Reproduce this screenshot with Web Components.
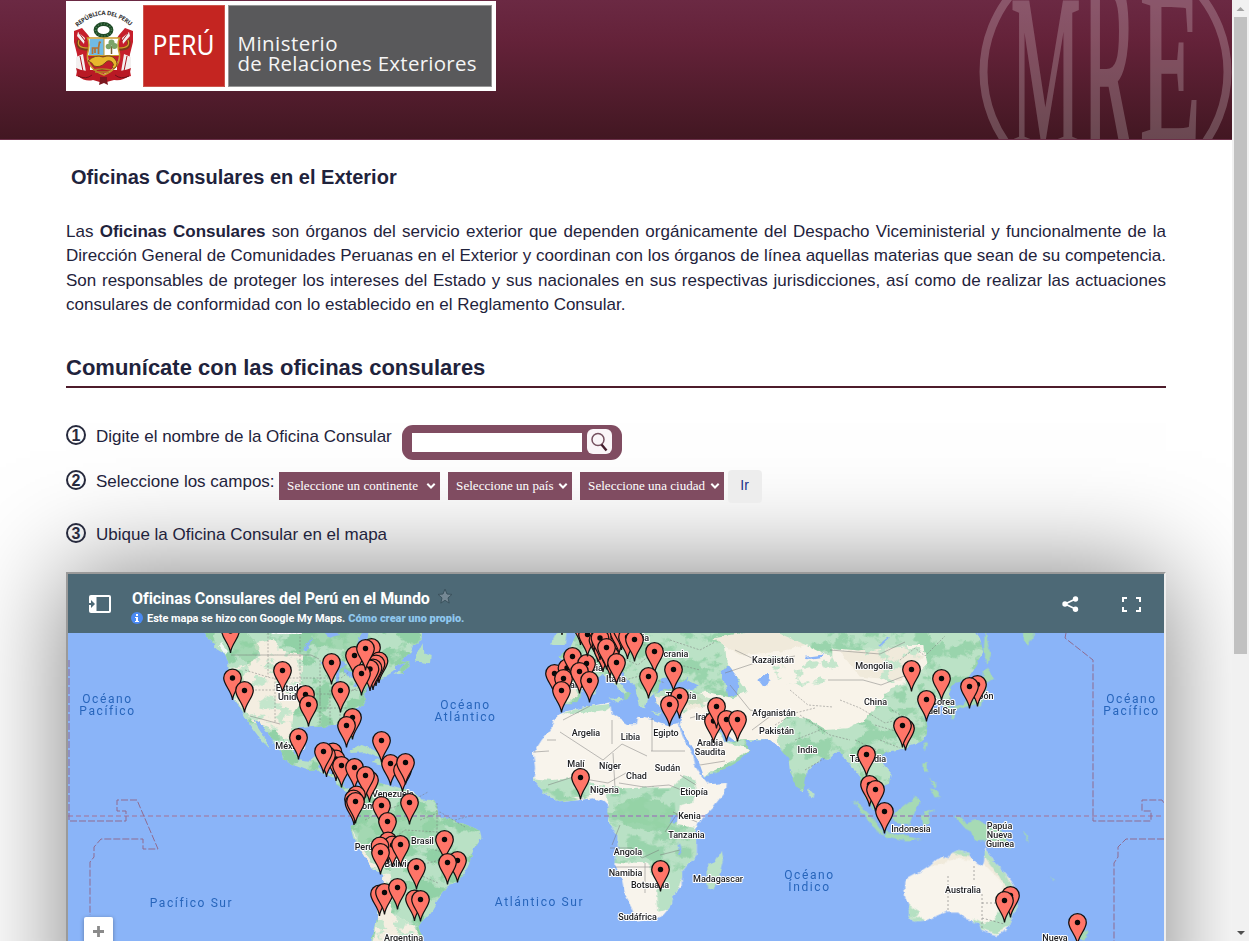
<!DOCTYPE html>
<html lang="es">
<head>
<meta charset="utf-8">
<title>Oficinas Consulares en el Exterior</title>
<style>
html,body{margin:0;height:941px;overflow:hidden;background:#fff}
body{font-family:"Liberation Sans",sans-serif;color:#1f233c}
</style>
</head>
<body>
<consular-page></consular-page>
<script>
const define=(name,html,after)=>customElements.define(name,class extends HTMLElement{
  constructor(){super();this.attachShadow({mode:'open'}).innerHTML=html;}
  connectedCallback(){if(after)after(this,this.shadowRoot);}
});

define('national-crest',`<style>:host{display:block;width:70px;height:86px}svg{display:block}</style>
<svg width="70" height="86" viewBox="70 3 70 86">
<defs><path id="arc" d="M77.500 27Q104 3 131.500 27"/></defs>
<text font-family="Noto Sans" font-size="6" font-weight="700" fill="#333" textLength="59"><textPath href="#arc" textLength="59">REPÚBLICA DEL PERU</textPath></text>
<path d="M74 31l8-3 6 7 2 3v38l-6 2-8-2q3-12 1-22l-3-12zM133 31l-8-3-6 7-2 3v38l6 2 8-2q-3-12-1-22l3-12z" fill="#c61f2c"/>
<path d="M78 32l7 6-1 6-7-8zM129 32l-7 6 1 6 7-8zM76 57l7-3 3 18-10-3zM131 57l-7-3-3 18 10-3z" fill="#f3f0f0"/>
<path d="M79 33l6 8M128 33l-6 8M80 56l3 15M127 56l-3 15" stroke="#a81721" stroke-width="1"/>
<path d="M79 40q-4 9 9 9M128 40q4 9-9 9" fill="none" stroke="#7b3b19" stroke-width="3.400"/>
<path d="M79 40q-3 8 9 8M128 40q3 8-9 8" fill="none" stroke="#d4a32a" stroke-width="1.200"/>
<path d="M76 68l2 8q7 6 15 4l10 3 11-3q9 1 15-4l2-8q-10 4-14 2H90q-6 2-14-2" fill="#b91925"/>
<path d="M78 76q8 4 14-1M129 76q-8 4-14-1" fill="none" stroke="#6e1119"/>
<ellipse cx="103.500" cy="30" rx="8" ry="6" fill="none" stroke="#1e4a26" stroke-width="3.800"/><ellipse cx="103.500" cy="30" rx="8" ry="6" fill="none" stroke="#52835a" stroke-width="1.600" stroke-dasharray="1 2"/>
<path d="M87.500 38h32q-3 6 0 16 1 14-15.500 21Q86 68 87.500 54q3-10 0-16z" fill="#fff" stroke="#c99a2c" stroke-width="1.500"/>
<path d="M89.500 39h14.500v16H89q2-8 .500-16z" fill="#70bbe5"/>
<path d="M88 56h31q-1 12-15.500 18Q89 69 88 56z" fill="#c01f2b"/><path d="M88 55.500h31M104 38v17" stroke="#c99a2c"/>
<path d="M92.500 54v-6h6M98.500 54v-6l1-6M95 48v5M99 42l2 .500" fill="none" stroke="#b67332" stroke-width="1.700"/>
<path d="M111.500 46v8" stroke="#765c2e" stroke-width="1.500"/>
<g fill="#7ba468"><circle cx="108.500" cy="46.500" r="2.800"/><circle cx="114.500" cy="46" r="3"/><circle cx="111.500" cy="42.500" r="3"/></g>
<path d="M88 61q7-7 15-4 8-3 12 2 4 5 0 9-2 1-3-1 3-2 0-5-4-3-7 1-5 5-11 3-2-4-6-5" fill="#e8b72d" stroke="#714414" stroke-width=".900"/>
<path d="M93 70q9-2 18 0M95 72h14" stroke="#b38225" stroke-width="1.300"/>
<path d="M100 77h7v3l1 5-4-2-5 2 1-5z" fill="#7b181f"/>
</svg>`);

define('site-header',`<style>
:host{display:flex;height:139px;border-bottom:1px solid #6b3049;background:linear-gradient(#6b2943 0,#642239 30%,#421722 100%);justify-content:space-between;box-sizing:content-box}
.logo{margin:1px 0 0 66px;width:430px;height:90px;background:#fff;display:flex;gap:3px;box-sizing:border-box;padding:4px 0 0 4px}
national-crest{margin:-2px 3px 0 0;flex:none}.logo svg{display:block;flex:none}.mark{display:block}
</style>
<div class="logo"><national-crest></national-crest>
<svg width="82" height="82" style="margin-left:-3px"><rect width="82" height="82" fill="#c42521"/><rect x=".5" y=".5" width="81" height="81" fill="none" stroke="#d06b62" stroke-width=".7"/><text x="9.500" y="50" font-family="Noto Sans" font-size="26.500" fill="#fff" textLength="62" lengthAdjust="spacingAndGlyphs">PERÚ</text></svg>
<svg width="264" height="82"><rect width="264" height="82" fill="#59595b"/><rect x=".5" y=".5" width="263" height="81" fill="none" stroke="#969696"/><g font-family="Open Sans" font-size="20.500" fill="#f5f5f5"><text x="9.500" y="46" textLength="100">Ministerio</text><text x="9.500" y="66" textLength="239">de Relaciones Exteriores</text></g></svg></div>
<svg class="mark" width="260" height="139" viewBox="972 0 260 139"><g opacity=".21" fill="#fff"><circle cx="1105.500" cy="72" r="122" fill="none" stroke="#fff" stroke-width="8"/>
<g font-family="Liberation Serif" font-size="100" stroke="#fff" stroke-width="1.800">
<text transform="translate(1011 147) scale(.78 2.200)">M</text><text transform="translate(1082 166) scale(.83 2.850)">R</text><text transform="translate(1140 140) scale(.99 2.200)">E</text></g></g></svg>`);

define('step-row',`<style>:host{display:flex;align-items:flex-start;font-size:17px;line-height:24px}.n{flex:none;display:grid;place-items:center;width:20px;height:20px;box-sizing:border-box;border:2px solid #272a3d;border-radius:50%;font:bold 16px/17px "Liberation Sans",sans-serif;color:#272a3d;margin-right:10px}::slotted(*){flex:none}.l{flex:none}</style><span class="n"></span><span class="l"></span><slot></slot>`,
(h,r)=>{r.querySelector('.n').textContent=h.getAttribute('n');r.querySelector('.l').textContent=h.getAttribute('label');});

define('search-box',`<style>:host{display:flex;box-sizing:border-box;width:220px;height:35px;border-radius:11px;background:#804c61;padding:4px 10px;gap:5px}.i{width:170px;height:19px;margin-top:4px;background:#fff}.b{width:25px;height:25px;border-radius:6px;background:#faf5f8}</style><div class="i"></div><div class="b"><svg width="25" height="25"><circle cx="11" cy="10.500" r="6" fill="none" stroke="#75505f" stroke-width="1.500"/><path d="M14.500 15.500L19.500 21.500" stroke="#431c2c" stroke-width="2.400"/></svg></div>`);

define('pick-list',`<style>:host{display:flex;align-items:center;justify-content:space-between;box-sizing:border-box;height:28px;background:#804c61;color:#fff;padding:0 4px 0 8.500px;font:13.100px "Liberation Serif",serif;white-space:nowrap}svg{flex:none}</style><slot></slot><svg width="10" height="8"><path d="M1.300 1.700L5 5.500 8.700 1.700" fill="none" stroke="#fff" stroke-width="2"/></svg>`);

define('go-button',`<style>:host{display:block;box-sizing:border-box;width:34px;height:33px;border-radius:4px;background:#ededed;font-size:14px;line-height:31px;text-align:center;color:#20308a}</style><slot></slot>`);

define('side-scroll',`<style>:host{display:flex;flex-direction:column;justify-content:space-between;width:17px;height:941px;background:#f1f1f1}.t{width:13px;height:637px;margin:0 2px auto;background:#c1c1c1}svg{display:block}</style><svg width="17" height="17"><path d="M4.500 11L8.500 7l4 4z" fill="#a3a3a3"/></svg><div class="t"></div><svg width="17" height="17"><path d="M5 7l4 4 4-4z" fill="#505050"/></svg>`);

define('map-bar',`<style>:host{display:flex;height:59px;background:#4d6976;font-family:Roboto,sans-serif;color:#fff}
.panel{margin:21px 21px 0 21px;width:22px;flex:none}.t{font-size:16px;font-weight:700;line-height:20px;display:flex;white-space:nowrap;letter-spacing:-.060px}.t svg{margin:-1px 0 0 7px}.s{font-size:11px;font-weight:700;line-height:15px;display:flex;white-space:nowrap;margin-top:2px;letter-spacing:-.030px}.s svg{margin:1px 4px 0 -1px}.s b{color:#8fc7ee;margin-left:3px}.c{padding-top:15px}.share{margin:22px 0 0 auto}.full{margin:22px 23px 0 43px}</style>
<svg class="panel" width="22" height="19"><path d="M2 0H20q2 0 2 2v14q0 2-2 2H2q-2 0-2-2V2Q0 0 2 0z" fill="#fff"/><path d="M7.500 2H20v14H7.500z" fill="#4d6976"/><path d="M0 8h2V5l4 4-4 4v-3H0z" fill="#4d6976"/></svg>
<div class="c"><div class="t"><span>Oficinas Consulares del Perú en el Mundo</span><svg width="16" height="17"><path d="M8 1l2 5 5 .400-4 3.500 1.200 5.200L8 12.300l-4.200 2.800L5 9.900 1 6.400 6 6z" fill="#758894" stroke="#3b525d"/></svg></div><div class="s"><svg width="12" height="12"><circle cx="6" cy="6" r="6" fill="#4a8af4"/><path d="M5 2h2v2H5zM4 5h3v4h1v1H4V9h1V6H4z" fill="#fff"/></svg><span>Este mapa se hizo con Google My Maps.</span><b>Cómo crear uno propio.</b></div></div>
<svg class="share" width="17" height="17"><path d="M13.500 3L3 8l10.500 5" fill="none" stroke="#fff" stroke-width="1.700"/><g fill="#fff"><circle cx="13.500" cy="3" r="2.700"/><circle cx="3" cy="8" r="2.700"/><circle cx="13.500" cy="13.300" r="2.700"/></g></svg>
<svg class="full" width="19" height="17"><path d="M5 2H1v4M14 2h4v4M5 15H1v-4M14 15h4v-4" fill="none" stroke="#fff" stroke-width="2"/></svg>`);

define('world-map',`<style>:host{display:block;position:relative;height:308px;overflow:hidden;background:#8ab4f8}svg{display:block}.zoom{position:absolute;left:16px;top:284px;width:29px;height:40px;background:#fff;border-radius:2px;box-shadow:0 1px 4px #0005}</style>
<svg id="m" width="1096" height="308" viewBox="68 633 1096 308">
<defs>
<filter id="rough" x="-5%" y="-5%" width="110%" height="110%"><feTurbulence type="fractalNoise" baseFrequency=".13" numOctaves="3" seed="6"/><feDisplacementMap in="SourceGraphic" scale="5" xChannelSelector="R" yChannelSelector="G"/></filter>
<filter id="woods" x="0" y="0" width="100%" height="100%" color-interpolation-filters="sRGB"><feTurbulence type="fractalNoise" baseFrequency=".016 .02" numOctaves="4" seed="11"/><feColorMatrix values="0 0 0 0 .57  0 0 0 0 .82  0 0 0 0 .65  10 0 0 0 -4.900"/><feComposite in2="SourceGraphic" operator="in"/></filter>
<filter id="steppe" x="0" y="0" width="100%" height="100%" color-interpolation-filters="sRGB"><feTurbulence type="fractalNoise" baseFrequency=".02 .03" numOctaves="4" seed="23"/><feColorMatrix values="0 0 0 0 .77  0 0 0 0 .9  0 0 0 0 .8  12 0 0 0 -6.400"/><feComposite in2="SourceGraphic" operator="in"/></filter>
<g id="pin"><path d="M0 22C-.700 13-8.800 7-8.800 0A8.800 8.800 0 0 1 8.800 0C8.800 7 .700 13 0 22z" fill="#ff7568" stroke="#111" stroke-width="1.250"/><circle r="2.700" fill="#090909"/></g>
<clipPath id="cw"><path d="M428 190L445 222 470 250 490 262 505 290 505 320 503 345 515 385 530 410 548 440 560 465 575 490 590 510 605 530 628 552 622 535 605 505 592 485 580 460 598 470 615 495 640 525 655 545 665 565 670 582 700 600 740 615 770 613 800 630 825 640 830 660 850 675 870 690 880 682 865 668 850 665 845 635 820 625 790 620 775 607 790 575 765 573 745 590 715 585 697 550 693 520 700 500 720 490 745 487 780 485 800 482 830 478 850 490 865 520 880 520 875 490 868 460 890 440 915 410 912 385 925 360 945 350 975 335 1000 320 1010 300 1040 290 1025 310 1000 330 1030 325 1045 305 1050 290 1020 285 1050 265 1060 240 1085 225 1085 190z"/><path d="M870 690L900 665 940 660 960 655 1000 663 1060 680 1080 703 1115 705 1130 720 1135 750 1165 760 1210 777 1260 797 1265 820 1240 855 1230 890 1215 925 1195 950 1165 960 1150 980 1130 1010 1110 1045 1085 1070 1075 1085 1080 1100 1090 1115 1080 1140 935 1140 945 1085 955 1045 965 995 970 930 940 910 920 885 900 855 880 820 872 790 885 770 865 745 880 705z"/></clipPath>
<clipPath id="af"><path d="M245 262L300 250 390 232 395 265 425 285 445 298 470 298 475 275 520 285 560 300 595 295 600 310 615 350 640 395 645 420 670 460 685 478 738 474 735 500 700 545 665 580 645 610 650 640 650 690 605 740 605 785 580 810 575 840 550 870 520 885 470 890 455 850 435 810 425 760 403 715 415 670 412 630 385 590 385 545 370 530 340 520 300 525 240 532 195 505 160 465 165 430 160 385 185 345 215 310 220 285z"/></clipPath>
<clipPath id="as"><path d="M222 175L225 220 245 235 290 235 300 215 310 185 340 170 365 150 390 160 405 180 430 205 430 225 445 215 450 205 425 180 400 150 390 125 410 120 430 150 460 180 475 220 480 245 495 250 500 225 525 205 530 235 550 260 590 262 605 270 600 300 610 320 640 370 660 420 672 455 720 440 780 405 812 375 795 350 775 335 765 350 735 350 720 320 700 285 715 300 735 325 760 345 800 348 870 345 890 360 910 385 925 400 930 440 950 480 965 500 975 480 980 440 1000 420 1030 400 1045 405 1070 380 1085 380 1095 400 1110 420 1125 435 1140 455 1145 495 1165 530 1182 560 1180 540 1165 500 1155 465 1175 460 1205 485 1230 475 1235 450 1210 420 1200 395 1220 380 1250 375 1270 370 1320 355 1340 330 1343 305 1335 270 1315 240 1320 220 1350 215 1385 240 1390 258 1410 255 1415 230 1405 210 1425 170 1460 165 1490 120 1510 80 1500 40 1470 0 280 0 290 25 270 70 235 95 260 110 265 145z"/></clipPath>
<clipPath id="au"><path d="M252 960L253 945 300 920 330 900 345 885 365 873 385 880 395 865 415 855 450 865 447 875 470 895 485 905 493 890 495 850 510 870 525 895 550 920 575 950 595 985 590 1025 575 1060 560 1095 530 1110 485 1095 475 1075 450 1065 435 1060 415 1040 380 1040 355 1050 320 1065 285 1070 268 1060 270 1035 255 995z"/></clipPath>
</defs>
<g filter="url(#rough)">
<g transform="translate(60 565) scale(.33333)"><g clip-path="url(#cw)"><path d="M400 180H1300V1150H400z" fill="#b9e1c5"/><path d="M400 180H1300V1150H400z" filter="url(#woods)"/>
<path id="prairie" d="M580 235L640 225 670 260 730 270 720 370 735 400 700 450 695 500 715 550 690 545 650 500 580 470 525 400 510 310 560 300 600 270zM870 780L900 840 935 890 990 920 1000 970 990 1040 1060 1080 1090 1140 940 1140 955 1040 960 920 920 900z" fill="#f4eee1"/><use href="#prairie" filter="url(#steppe)"/>
<path d="M510 200h50l40 50-30 50-50-40zM750 190h160l40 40-60 30-80-10-50-20zM520 310l20 80 25 10-20-80zM900 770l80-40 150 10 40 70-100 40-110-40-70 40z" fill="#94d2a5" opacity=".6"/>
<path d="M780 295L830 283 862 300 850 310 800 305zM828 315l12-5-5 50-12 0zM850 310l35 12 10 25-25-8zM880 360l45-18-5 10-35 15zM790 200l35-10 15 20-30 8zM890 240l20-50 15 10-5 40zM755 215l-15 45-10-5z" fill="#8ab4f8"/></g>
<path d="M1065 290l10-28 13-27 2 27 22 8-2 28-20-6zM865 560l40-20 40 15 25 20-20 3-35-16-45 2zM935 590l30-12 28 15-20 8zM880 598l20 2-8 8z" fill="#b5e0c2"/><path d="M485 235l20 25-8 12-20-30z" fill="#fff" opacity=".8"/></g>
<g transform="translate(480 625) scale(.33333)">
<g clip-path="url(#as)"><path d="M200 0H1550V600H200z" fill="#bbe2c6"/><path d="M200 0H1550V600H200z" filter="url(#woods)" opacity=".8"/>
<path id="dry" d="M735 60L800 30 900 40 980 60 1060 100 1060 70 1120 75 1180 90 1280 60 1330 60 1340 120 1290 170 1230 190 1190 240 1150 290 1100 310 1040 315 980 280 920 270 890 310 900 400 870 345 760 345 690 290 735 350 812 375 670 455 600 300 600 220 680 200 760 220 800 200 740 110z" fill="#f8f3e9"/>
<path d="M700 40l160-30 120 50-80 20-120 10zM1080 80l200-15 50 30-70 70-120-10zM525 215l60-5 80 10 20 25-80 10-70-10zM230 200l50-20 15 30-30 20z" fill="#f0eadb"/>
<path d="M860 90L1000 110 1060 100 1080 140 1000 190 900 170zM1150 60L1340 60 1340 160 1260 180 1180 150zM640 210L720 210 730 280 690 280z" filter="url(#steppe)"/>
<path d="M1130 410l35 60 15 70-30-70zM560 215l80-20 60 30-60 15z" fill="#94d2a5" opacity=".45"/>
<path d="M530 200L545 160 580 155 600 170 625 155 620 165 660 185 620 195 580 190zM745 120L770 150 775 180 770 210 745 215 735 170 720 145z M975 95l60-7-5 7-50 8zM835 165l25-20 15 20-25 20zM1195 60l30-25 5 3-30 27z" fill="#8ab4f8"/></g>
<g clip-path="url(#af)"><path d="M140 200H750V950H140z" fill="#f8f4ec"/><path d="M150 460L220 465 300 455 350 480 430 490 580 485 610 450 650 465 640 530 600 540 590 600 650 610 650 720 605 760 575 850 535 860 530 770 500 715 400 710 380 500 150 540z" fill="#b9e1c5"/><path d="M150 490L580 490 590 600 650 610 640 700 600 740 400 710 380 520 150 540z" filter="url(#woods)" opacity=".8"/>
<path d="M400 550l60-35 90 15 45 40-20 30-70 20-70-20z" fill="#94d2a5" opacity=".8"/><path d="M245 265l70-20 90-10-30 20-80 10z" fill="#bbe2c6"/><path d="M572 575l22-4-3 20-18 3zM597 655l8 30-6 3-6-28z" fill="#8ab4f8"/></g>
<path d="M725 678l5 22-12 50-18 45-18-5-5-25 6-20-1-25 23-10zM985 488l16 20-5 15-12-4zM335 185l10 0 3 25-13 3zM385 220l45 3-12 13zM510 260l35 5-10 5zM600 257l24-6-14 15zM215 50l15-30 30 5-5 35-40 0zM285 0h35v30l-30 5z" fill="#bbe2c6"/></g>
<g transform="translate(820 565) scale(.33333)"><g clip-path="url(#au)"><path d="M240 840H620V1130H240z" fill="#f8f4ec"/><path d="M330 900l90-60 60 50 20-50 90 130-15 100-30 30-90-10 50-20 50-20-10-100-60-60-80-10-50 20z" fill="#f0eadb"/><path d="M480 845l30 20 40 50 15 30 35 40-20 90-50 30-70-20 60-20 30-50 10-50-80-110zM385 860l70-15 10 30-40-5zM250 1010l50 30-10 15-30 10 40-10 20 15-20 30-60-10zM460 1060l30 15-5 25-25-10z" fill="#b5e0c2"/></g>
<path d="M490 325l10-15 23 30-20 15-12 45-5 20-45 5-40 10-10-5 25-10 40-20 25-25 10-40zM390 445l15-2-2 25-10-10zM495 190l10 55 8 25-15 33-6-60zM612 190h40l-28 52-12-12zM310 535l12-5-8 30zM310 595l13 0 0 25-12 0zM325 635l25 25-5 8zM330 670l22 5 10 20-18 2zM95 705l30 20 30 30 20 25 20 30-22-10-30-35-25-35zM200 800l40 8 70 18-55 0-60-12zM225 745l45-35 15-15 15 12-15 30-15 40-40-2-10-15zM305 755l10-15 35-3-25 10 5 30-20 3zM405 755l25 5 10 15 30-10 30 15 40 15 35 55-35-12-15-10-60 0-15-30-20-10zM610 800l5 0 15 35-8-8zM690 935l13 12-5 0zM775 1090l30 10-10 30-20-5-10 20z" fill="#a6dab4"/></g>
</g>
<g fill="none" stroke="#777" stroke-width=".650" opacity=".75">
<g stroke-dasharray="2 1.500"><path d="M268 633v22M300 633v22M268 655v22M300 655v33M245 670l26 8h35M255 690h48M275 678v45M320 660v44M306 678h35l8-6M306 694h38l14-6M306 708h42M320 690v33M330 690v34M340 700v22M352 690l15 1M365 820l20-10 25-8 18-10M385 845l20-15 32 2M400 860l20 5 20-5M420 820l20-8 25 15M437 803v40M420 875l18 8M455 820l18-5M435 850l30 8M595 660l25-3 18 8 14-12M605 645h50M625 680l18-5 22 8M670 640l30 10 15-8M680 665l20 5M790 690l18 15 25 2M775 725l20-12 20-5M800 715l30 20 20 5M840 700l20 8 25 15 20-5M875 725l20 6 18-5M880 740l20 8M892 710l20 12M855 740l22 10M900 660l15-12 10 8 20-20M795 740l25-10M805 770l20-12"/></g>
<path d="M231 655h80l8 4M250 716l30 8M534 752l15-1M547 740h9M560 732l43 28 19-16 25 12M548 785l25-8 35 6 18-10M615 788l-2-35M651 751h34M652 718v33M612 720v24M563 720l27-14M619 783l25 4 25-2 20 8M680 775l16 10M610 848h22l10 10 17-8M615 867h45M645 863v30M673 812l24 10M665 832l12-18M620 825l-8 20M660 855l20-5M690 718l30-8 20 3M700 765l25-4M730 685l20 25 20 5M735 650l25 12 35-6M725 673l30-10M752 730l20-15M828 680h35l18 5 26-10M830 650l50 4 25-12"/>
<path stroke="#777" stroke-width=".800" stroke-dasharray="2 2" d="M948 876v36M974 866v15M982 894v35M982 903h20M982 918l22 6"/></g>
<g fill="none" stroke="#8f6b8f" stroke-width="1"><path d="M68 816H1164" stroke="#9c87b5" stroke-width="1.500" stroke-dasharray="5 3"/><path stroke-dasharray="7 2" d="M69 660v161h57v-10h-9v-11h20l21 49h-15v-10h-42l-7 8v10l-4 5v53M1066 633l-1 5 28 22v161h58v-10h-9v-11h20l4 6M1164 839h-38l-8 8v10l-4 6v80"/></g>
<g id="water" font-family="Roboto" font-size="12" fill="#2765bb" text-anchor="middle" letter-spacing="1.600"></g>
<g id="land" font-family="Roboto" font-size="9" font-weight="500" fill="#202124" text-anchor="middle" stroke="#fff" stroke-width="2" stroke-linejoin="round" paint-order="stroke"></g>
<g id="pins"></g>
</svg><div class="zoom"><svg width="29" height="29"><path d="M9 14.500h11M14.500 9v11" stroke="#8a8a8a" stroke-width="2.800"/></svg></div>`,
(h,r)=>{
 const put=(id,rows)=>{r.getElementById(id).innerHTML=rows.map(([t,x,y])=>`<text x="${x}" y="${y}">${t}</text>`).join('')};
 put('water',[['Océano',107.500,702.500],['Pacífico',107.500,715],['Océano',465.500,708.500],['Atlántico',465.500,721],['Pacífico Sur',191.500,907],['Atlántico Sur',539.500,906],['Océano',809.500,878.500],['Índico',809.500,891],['Océano',1131.500,702.500],['Pacífico',1131.500,715]]);
 put('land',[['Canadá',286,633],['Estados',292,691],['Unidos',292,700],['México',290,749],['Venezuela',393,796.500],['Colombia',368,808.500],['Perú',364,850],['Brasil',422.500,843.500],['Bolivia',398,867],['Argentina',403.500,940.500],['Polonia',634,641],['Francia',588,670.500],['Italia',616,682],['España',570,688],['Ucrania',673,657],['Turquía',681,698.500],['Argelia',586,735.500],['Libia',630.500,739.500],['Egipto',666,735.500],['Irak',703,719.500],['Arabia',710,745.500],['Saudita',710,754.500],['Malí',576,767],['Níger',610,768.500],['Chad',636.500,779],['Sudán',667.500,770.500],['Nigeria',604.500,792.500],['Etiopía',694,794.500],['Kenia',689.500,818.500],['Tanzania',686.500,837.500],['Angola',628,854.500],['Namibia',625.500,875.500],['Botsuana',650,887.500],['Sudáfrica',637.500,920],['Madagascar',718,881.500],['Kazajistán',773,662.500],['Afganistán',774,715.500],['Pakistán',776.500,733.500],['India',807.500,752.500],['Mongolia',874,668.500],['China',875.500,704.500],['Corea',943,704.500],['del Sur',942,713.500],['Japón',981,698.500],['Tailandia',868,761.500],['Indonesia',911,831.500],['Papúa',999.500,828.500],['Nueva',999.500,837.500],['Guinea',1000,846.500],['Australia',963,892.500],['Nueva',1055,940.500]]);
 const p='230.5,631 232.5,678 244.5,690.5 282.5,670.5 305.5,694.5 308.5,704.5 331.5,662.5 340.5,690.5 371.5,647.5 379,661 376,664 373,668 370,669 354.5,655.5 361.5,673.5 365.5,648.5 352.5,717.5 346.5,725.5 298.5,737.5 381.5,740.5 333,752 336,759 326.5,755 323.5,751.5 341.5,765.5 354.5,767.5 369.5,780 365.5,775.5 390.5,763.5 402.5,770 405.5,762.5 356.5,795 353.5,799 354,803 355.5,801.5 381.5,805.5 409.5,802.5 387.5,821.5 388,841 392.5,845 380,846 400.5,844.5 380.5,852.5 444.5,839.5 457.5,860.5 447.5,862.5 416.5,867.5 379.5,894 384.5,892.5 397.5,887.5 414.5,899 420.5,899.5 562,613 554.5,673.5 567,668 572.5,656.5 563.5,678.5 561.5,690.5 586.5,663.5 579.5,671.5 589.5,680.5 580.5,623 587.5,634.5 598,640 601,644 603,650 613,637 619,632 621.5,628 627.5,637 610,655 600,638 606.5,647.5 616.5,662.5 634.5,639.5 654.5,651.5 648.5,676.5 673.5,669.5 679.5,696.5 669.5,704.5 713.5,721 716.5,706.5 726.5,719.5 737.5,719.5 580.5,777.5 660.5,869.5 911.5,669.5 941.5,678.5 926.5,699.5 977.5,684.5 969.5,686.5 905.5,728.5 902.5,725.5 866.5,754.5 869.5,784.5 875.5,789.5 884.5,811.5 1010.5,895.5 1004.5,900.5 1077.5,922.5';
 r.getElementById('pins').innerHTML=p.split(' ').map(s=>{const[x,y]=s.split(',');return `<use href="#pin" x="${x}" y="${y}"/>`}).join('');
});

define('map-frame',`<style>:host{display:block;box-sizing:border-box;width:1100px;height:480px;border:2px solid;border-color:#9a9a9a #eee #eee #9a9a9a;box-shadow:0 0 100px rgba(0,0,0,.5);overflow:hidden}</style><map-bar></map-bar><world-map></world-map>`);

define('consular-page',`<style>
:host{display:flex;width:1249px;height:941px;overflow:hidden}
.page{width:1232px;flex:none;overflow:hidden}main{margin-left:66px;width:1100px}
h1{font-size:20px;line-height:24px;margin:25px 0 0 5px}
p{font-size:17px;line-height:24.400px;margin:31px 0 0;text-align:justify}
h2{font-size:22px;line-height:28px;margin:36px 0 0;padding-bottom:4px;border-bottom:2px solid #4d1c2b}
step-row{height:45px}step-row:first-of-type{margin-top:37px}.r2{height:53px}.r3{height:49px}
search-box{margin-left:10px}pick-list{margin:2px 0 0 8px}pick-list.a{margin-left:4px;width:161px}.b{width:124px}.c{width:144px}go-button{margin-left:4px}
</style><div class="page"><site-header></site-header><main><h1>Oficinas Consulares en el Exterior</h1>
<p>Las <b>Oficinas Consulares</b> son órganos del servicio exterior que dependen orgánicamente del Despacho Viceministerial y funcionalmente de la Dirección General de Comunidades Peruanas en el Exterior y coordinan con los órganos de línea aquellas materias que sean de su competencia. Son responsables de proteger los intereses del Estado y sus nacionales en sus respectivas jurisdicciones, así como de realizar las actuaciones consulares de conformidad con lo establecido en el Reglamento Consular.</p>
<h2>Comunícate con las oficinas consulares</h2>
<step-row n="1" label="Digite el nombre de la Oficina Consular"><search-box></search-box></step-row>
<step-row class="r2" n="2" label="Seleccione los campos:"><pick-list class="a">Seleccione un continente</pick-list><pick-list class="b">Seleccione un país</pick-list><pick-list class="c">Seleccione una ciudad</pick-list><go-button>Ir</go-button></step-row>
<step-row class="r3" n="3" label="Ubique la Oficina Consular en el mapa"></step-row>
<map-frame></map-frame></main></div><side-scroll></side-scroll>`);
</script>
</body>
</html>
